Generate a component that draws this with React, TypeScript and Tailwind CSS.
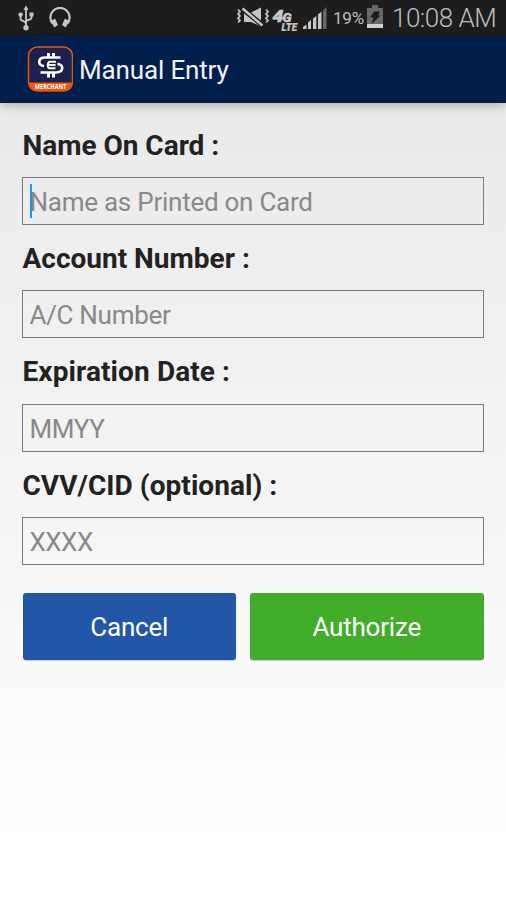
import { useState } from "react";

const fields = [
  { id: "name", label: "Name On Card :", placeholder: "Name as Printed on Card", labelClass: "tracking-[-0.02px]", inputClass: "tracking-[-0.25px]" },
  { id: "account", label: "Account Number :", placeholder: "A/C Number", labelClass: "tracking-[0px]", inputClass: "tracking-[-0.3px]" },
  { id: "expiry", label: "Expiration Date :", placeholder: "MMYY", labelClass: "tracking-[0.1px]", inputClass: "tracking-[-0.4px]" },
  { id: "cvv", label: "CVV/CID (optional) :", placeholder: "XXXX", labelClass: "tracking-[0.05px]", inputClass: "tracking-[-0.5px]" },
];

const UsbIcon = () => (
  <svg className="w-4 h-[26px] shrink-0" viewBox="0 0 16 26" fill="none" stroke="#c6c6c6" strokeWidth="1.8">
    <path d="M8 4v18M2.5 10v4.2c0 2 5.5 1.6 5.5 4.8M13.5 10v2.5c0 3-5.5 1.8-5.5 4.5" />
    <path d="M8 .5 10.6 5H5.4z" fill="#c6c6c6" stroke="none" />
    <circle cx="2.6" cy="9.6" r="2.2" fill="#c6c6c6" stroke="none" />
    <path d="M11.5 7.5h4v4h-4z" fill="#c6c6c6" stroke="none" />
    <circle cx="8" cy="22.8" r="2.7" fill="#c6c6c6" stroke="none" />
  </svg>
);

const HeadphonesIcon = () => (
  <svg className="w-[22px] h-[21px] shrink-0" viewBox="0 0 22 21" fill="none">
    <path d="M3.500 16.500A9.600 9.600 0 1 1 18.500 16.500" stroke="#c6c6c6" strokeWidth="2.200" />
    <path d="m2 14 4-2.600L9 18 5.200 20.500zM20 14l-4-2.600L13 18l3.800 2.500z" fill="#c6c6c6" />
  </svg>
);

const MutedIcon = () => (
  <svg className="w-[34px] h-[22px] shrink-0" viewBox="0 0 34 22" fill="none">
    <path d="M8 5.500h7L25 .500v19L15 15H8z" fill="#c6c6c6" />
    <path d="m6 1.500 21 17" stroke="#1d1d1d" strokeWidth="5" />
    <path d="m6.500 1.500 20 17" stroke="#c6c6c6" strokeWidth="2.500" />
    <path d="M2 2.500l2 2.200-2 2.200 2 2.200-2 2.200 2 2.200-2 2M30 2.500l2 2.200-2 2.200 2 2.200-2 2.200 2 2.200-2 2" stroke="#c6c6c6" strokeWidth="1.700" />
  </svg>
);

// the LTE line is tucked under the larger 4G mark
const NetworkIcon = () => (
  <svg className="w-[28px] h-[25px] shrink-0 overflow-visible" viewBox="0 0 28 25" fill="#c6c6c6" stroke="#c6c6c6" strokeWidth=".5" fontFamily="Roboto, sans-serif" fontStyle="italic" fontWeight="900">
    <text x="0.500" y="15" fontSize="17" textLength="11" lengthAdjust="spacingAndGlyphs">4</text>
    <text x="10.500" y="15" fontSize="13" textLength="9" lengthAdjust="spacingAndGlyphs">G</text>
    <text x="9.500" y="23.500" fontSize="10" strokeWidth=".2" textLength="15.500" lengthAdjust="spacingAndGlyphs">LTE</text>
  </svg>
);

const SignalIcon = () => (
  <svg className="w-[24px] h-[22px] shrink-0" viewBox="0 0 24 22" fill="#c6c6c6">
    <path d="M0 20 3.500 17.500V22H0zM5 15.500 8 13v9H5zM10 11.500 13.300 9v13H10zM15 7.500 18.500 4.500V22H15z" />
    <path d="M20 3.500 23.500 0v22H20z" fill="#666" />
  </svg>
);

const BatteryIcon = () => (
  <svg className="w-4 h-[23px] shrink-0" viewBox="0 0 16 23">
    <path d="M5 0h6v3h5v20H0V3h5z" fill="#686868" />
    <path d="M0 19h16v4H0z" fill="#d0d0d0" />
    <path d="M7 6.500h6l-2 4h2.500L4.500 19l2-6.500H3z" fill="#1d1d1d" />
  </svg>
);

const Logo = () => (
  <svg className="w-[46px] h-[46px] shrink-0" viewBox="0 0 46 46">
    <rect x="1.500" y="1" width="44" height="44" rx="9" fill="#1c204c" />
    <path d="M1.500 36.500h44a9 9 0 0 1-9 8.500h-26a9 9 0 0 1-9-8.500z" fill="#f4550f" />
    <rect x="1.500" y="1" width="44" height="44" rx="9" fill="none" stroke="#ea540f" strokeWidth="1.500" />
    <g fill="none" stroke="#fff">
      <path d="M33.500 11.500H18c-7.500 0-7.500 8.500-1 8.500M13.500 26.500H29c8 0 8-8.500 1.500-8.500" strokeWidth="2.600" />
      <path d="M21.500 7v4M26.500 7v4M21.500 27v4.500M26.500 27v4.500" strokeWidth="3" />
      <path d="M29 15.700h-6c-2.500 0-3.500 6.600 0 6.600h5.500M20.500 19h8" strokeWidth="2" />
    </g>
    <text x="23.500" y="43" textAnchor="middle" textLength="31.500" lengthAdjust="spacingAndGlyphs" fontSize="6.600" fontWeight="700" fill="#fff" fontFamily="Open Sans, sans-serif">MERCHANT</text>
  </svg>
);

const StatusBar = () => (
  <div className="flex h-9 shrink-0 bg-[#1d1d1d] pl-[18px] text-[#bebebe]">
    <div className="pt-[5px]"><UsbIcon /></div>
    <div className="ml-[15px] pt-[7px]"><HeadphonesIcon /></div>
    <div className="ml-auto pt-[7px]"><MutedIcon /></div>
    <div className="ml-[2px] pt-[7px]"><NetworkIcon /></div>
    <div className="ml-[3px] pt-[7px]"><SignalIcon /></div>
    <span className="ml-[6px] w-[32px] whitespace-nowrap pt-[6px] text-[17px] leading-6 tracking-[-0.2px]">19%</span>
    <div className="ml-[2px] pt-[5px]"><BatteryIcon /></div>
    <span className="ml-[9px] w-[114px] whitespace-nowrap pt-[2px] text-[26px] leading-8 tracking-[-0.5px] font-light">10:08 AM</span>
  </div>
);

const App = () => {
  const [values, setValues] = useState<Record<string, string>>({});

  return (
    <div className="flex h-[900px] w-[506px] flex-col overflow-hidden bg-linear-to-b from-[#eaeaea] from-12% to-white to-95% font-['Roboto',sans-serif]">
      <StatusBar />

      <header className="flex h-[67px] shrink-0 items-center border-b border-[#171739] bg-[#001f4c] pl-[27px] shadow-[0_2px_10px_rgba(0,0,0,0.28)]">
        <Logo />
        <h1 className="ml-[6px] pt-px text-[26px] leading-8 tracking-[-0.15px] text-[#f2f2f2]">Manual Entry</h1>
      </header>

      <form className="pt-[24px] pr-[22.5px] pl-[22px]" onSubmit={(e) => e.preventDefault()}>
        {fields.map((field) => (
          <div key={field.id} className="flex h-[113.4px] flex-col">
            <label htmlFor={field.id} className={`h-[50px] whitespace-nowrap pt-[0.6px] pl-[0.5px] text-[28px] leading-9 font-bold text-[#222] ${field.labelClass}`}>
              {field.label}
            </label>
            <div className="flex h-12 items-center border border-[#7b7b7b] px-[6.5px]">
              {field.id === "name" && <span className="-mr-0.5 h-[34px] w-0.5 bg-[#2496f3]" />}
              <input
                id={field.id}
                value={values[field.id] ?? ""}
                placeholder={field.placeholder}
                onChange={(e) => setValues({ ...values, [field.id]: e.target.value })}
                className={`min-w-0 flex-1 bg-transparent pt-[1.500px] text-[26px] leading-8 outline-none placeholder:text-[#898989] ${field.inputClass}`}
              />
            </div>
          </div>
        ))}

        {/* Actions */}
        <div className="mt-3 flex gap-[14px] pl-[0.5px] text-[26px] tracking-[-0.2px] text-white">
          <button type="button" className="h-[67px] w-[213.500px] rounded-[3px] bg-[#2257a8] pt-[3px] shadow-[0_1px_1px_rgba(0,0,0,0.2)]">
            Cancel
          </button>
          <button type="submit" className="h-[67px] flex-1 rounded-[3px] bg-[#41ad29] pt-[3px] shadow-[0_1px_1px_rgba(0,0,0,0.2)]">
            Authorize
          </button>
        </div>
      </form>
    </div>
  );
};

export default App;
